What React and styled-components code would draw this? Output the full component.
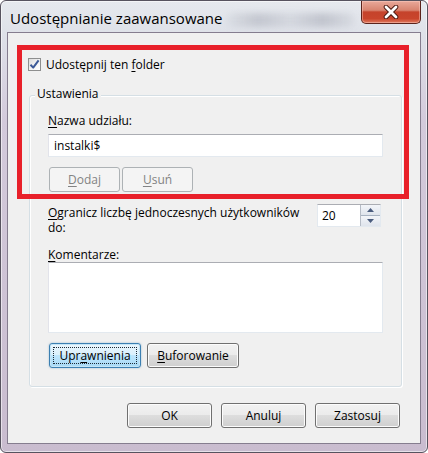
import React from 'react';
import styled, { createGlobalStyle } from 'styled-components';

const Global = createGlobalStyle`
    html, body {
        margin:0;
        padding:0;
        background:#ffffff;
    }
    * {
        box-sizing:border-box;
    }
`;

const Window = styled.div`
    position:relative;
    width:428px;
    height:453px;
    display:flex;
    flex-direction:column;
    padding:0 6px 8px 6px;
    border:1px solid #57535f;
    border-radius:6px;
    background:linear-gradient(180deg, #e6e9ee 0px, #dfe2e9 30px, #d3cadb 120px, #c9bccf 100%);
    box-shadow:inset 0 0 0 1px rgba(255,255,255,0.55);
    font-family:"Open Sans", "Noto Sans", sans-serif;
    color:#000;
    overflow:hidden;
`;

const TitleBar = styled.div`
    height:31px;
    display:flex;
    align-items:flex-start;
    padding-left:3px;
    flex:none;
`;

const Title = styled.div`
    padding-top:7px;
    font-size:15px;
    line-height:20px;
    white-space:nowrap;
    color:#000;
`;

// blurred glass behind the title, no text of its own
const Glass = styled.div`
    flex:1;
    height:14px;
    margin:12px 6px 0 4px;
    border-radius:7px;
    background:linear-gradient(90deg, rgba(120,124,140,0.05) 0%, rgba(120,124,140,0.28) 25%, rgba(120,124,140,0.12) 50%, rgba(120,124,140,0.3) 75%, rgba(120,124,140,0.08) 100%);
    filter:blur(3px);
`;

const CloseButton = styled.div`
    flex:none;
    width:60px;
    height:23px;
    display:flex;
    align-items:center;
    justify-content:center;
    border:1px solid #5b231b;
    border-top:none;
    border-radius:0 0 5px 5px;
    background:linear-gradient(180deg, #e9a99a 0%, #d88470 42%, #c5432b 50%, #c9452c 80%, #e07a5e 100%);
    box-shadow:inset 0 0 0 1px rgba(255,210,200,0.45);
`;

const Client = styled.div`
    flex:1;
    display:flex;
    flex-direction:column;
    padding:23px 18px 0 21px;
    border:1px solid #857d8f;
    background:#f0f0f0;
`;

const CheckRow = styled.label`
    display:flex;
    align-items:center;
    height:17px;
    margin-left:-1px;
    font-size:12px;
    line-height:17px;
`;

const Box = styled.span`
    width:13px;
    height:13px;
    margin-right:5px;
    display:inline-flex;
    align-items:center;
    justify-content:center;
    border:1px solid #8e8f8f;
    background:linear-gradient(135deg, #dcdcdc 0%, #f5f5f5 60%, #ffffff 100%);
`;

const U = styled.span`
    text-decoration:underline;
    text-underline-offset:2px;
`;

const Group = styled.div`
    margin-top:22px;
    display:flex;
    flex-direction:column;
    padding:0 18px 18px 18px;
    border:1px solid #d5dfe5;
    border-radius:3px;
    box-shadow:inset 1px 1px 0 #ffffff, 1px 1px 0 #ffffff;
`;

const Caption = styled.div`
    align-self:flex-start;
    margin:-10px 0 0 -13px;
    padding:0 2px;
    background:#f0f0f0;
    font-size:12px;
    line-height:16px;
`;

const Label = styled.div`
    margin-top:${p => p.$top || 0}px;
    font-size:12px;
    line-height:${p => p.$lh || 16}px;
`;

const TextBox = styled.div`
    height:${p => p.$h || 23}px;
    margin-top:${p => p.$top || 0}px;
    padding:3px 5px;
    border:1px solid #e3e9ef;
    border-top-color:#abadb3;
    border-left-color:#e2e3ea;
    background:#ffffff;
    font-size:12px;
    line-height:16px;
`;

const ButtonRow = styled.div`
    display:flex;
    gap:${p => p.$gap || 2}px;
    margin-top:${p => p.$top || 0}px;
    justify-content:${p => p.$end ? 'flex-end' : 'flex-start'};
    padding-right:${p => p.$end ? 2 : 0}px;
    padding-left:1px;
`;

const Button = styled.div`
    position:relative;
    width:${p => p.$w || 71}px;
    height:25px;
    display:flex;
    align-items:center;
    justify-content:center;
    border:1px solid ${p => p.$disabled ? '#adb2b5' : p.$focus ? '#3c7fb1' : '#707070'};
    border-radius:3px;
    font-size:12px;
    line-height:16px;
    color:${p => p.$disabled ? '#838383' : '#000'};
    background:${p => p.$disabled
        ? '#f4f4f4'
        : p.$focus
            ? 'linear-gradient(180deg, #eaf6fd 0%, #d9f0fc 49%, #bee6fd 50%, #a7d9f5 100%)'
            : 'linear-gradient(180deg, #f2f2f2 0%, #ebebeb 49%, #dddddd 50%, #cfcfcf 100%)'};
    box-shadow:${p => p.$disabled ? 'none' : p.$focus ? 'inset 0 0 0 1px #c4e5f6, 0 0 2px rgba(60,127,177,0.5)' : 'inset 0 0 0 1px #fcfcfc'};
`;

const FocusRing = styled.span`
    position:absolute;
    inset:3px;
    border:1px dotted #1d2a35;
    pointer-events:none;
`;

const LimitRow = styled.div`
    display:flex;
    align-items:flex-start;
    margin-top:12px;
`;

const LimitText = styled.div`
    width:262px;
    margin-top:1px;
    font-size:12px;
    line-height:15px;
`;

const Spinner = styled.div`
    width:64px;
    height:23px;
    margin-left:7px;
    display:flex;
    border:1px solid #e3e9ef;
    border-top-color:#abadb3;
    background:#ffffff;
`;

const SpinValue = styled.div`
    flex:1;
    padding:3px 4px;
    font-size:12px;
    line-height:16px;
`;

const SpinButtons = styled.div`
    width:20px;
    display:flex;
    flex-direction:column;
    border-left:1px solid #b6bcc6;
`;

const SpinHalf = styled.div`
    flex:1;
    display:flex;
    align-items:center;
    justify-content:center;
    border:1px solid #a8b3c2;
    border-width:${p => p.$down ? '0' : '0 0 1px 0'};
    background:linear-gradient(180deg, #f3f5f9 0%, #dfe4ec 100%);
`;

const Footer = styled(ButtonRow)`
    margin-top:16px;
`;

const Annotation = styled.div`
    position:absolute;
    left:16px;
    top:44px;
    width:392px;
    height:154px;
    border:5px solid #e8202a;
    pointer-events:none;
`;

function CloseGlyph(){
    return (
        <svg width="18" height="14" viewBox="0 0 18 14">
            <path d="M4 2 L14 12 M14 2 L4 12" stroke="#4b1a12" strokeWidth="4.6" strokeLinecap="round" />
            <path d="M4 2 L14 12 M14 2 L4 12" stroke="#ffffff" strokeWidth="2.8" strokeLinecap="round" />
        </svg>
    );
}

function Check(){
    return (
        <svg width="11" height="11" viewBox="0 0 11 11">
            <path d="M1.5 5.8 L4.2 8.6 L9.6 1.4" fill="none" stroke="#3d5a98" strokeWidth="2" strokeLinejoin="round" />
        </svg>
    );
}

function Arrow({ down }){
    return (
        <svg width="7" height="4" viewBox="0 0 7 4">
            <path d={down ? 'M0 0 L7 0 L3.5 4 Z' : 'M0 4 L7 4 L3.5 0 Z'} fill="#4a5c7e" />
        </svg>
    );
}

function App(){
    return (
        <>
            <Global />
            <Window>
                <TitleBar>
                    <Title>Udostępnianie zaawansowane</Title>
                    <Glass />
                    <CloseButton><CloseGlyph /></CloseButton>
                </TitleBar>
                <Client>
                    <CheckRow>
                        <Box><Check /></Box>
                        <span>Udostępnij ten <U>f</U>older</span>
                    </CheckRow>
                    <Group>
                        <Caption>Ustawienia</Caption>
                        <Label $top={11}><U>N</U>azwa udziału:</Label>
                        <TextBox $top={5}>instalki$</TextBox>
                        <ButtonRow $top={10}>
                            <Button $disabled><span><U>D</U>odaj</span></Button>
                            <Button $disabled><span><U>U</U>suń</span></Button>
                        </ButtonRow>
                        <LimitRow>
                            <LimitText><U>O</U>granicz liczbę jednoczesnych użytkowników do:</LimitText>
                            <Spinner>
                                <SpinValue>20</SpinValue>
                                <SpinButtons>
                                    <SpinHalf><Arrow /></SpinHalf>
                                    <SpinHalf $down><Arrow down /></SpinHalf>
                                </SpinButtons>
                            </Spinner>
                        </LimitRow>
                        <Label $top={13} $lh={14}><U>K</U>omentarze:</Label>
                        <TextBox $h={71} />
                        <ButtonRow $top={10} $gap={6}>
                            <Button $w={92} $focus><FocusRing /><span>Upr<U>a</U>wnienia</span></Button>
                            <Button $w={92}><span><U>B</U>uforowanie</span></Button>
                        </ButtonRow>
                    </Group>
                    <Footer $end $gap={9}>
                        <Button $w={85}>OK</Button>
                        <Button $w={85}>Anuluj</Button>
                        <Button $w={85}>Zastosuj</Button>
                    </Footer>
                </Client>
                <Annotation />
            </Window>
        </>
    );
}

export default App;
